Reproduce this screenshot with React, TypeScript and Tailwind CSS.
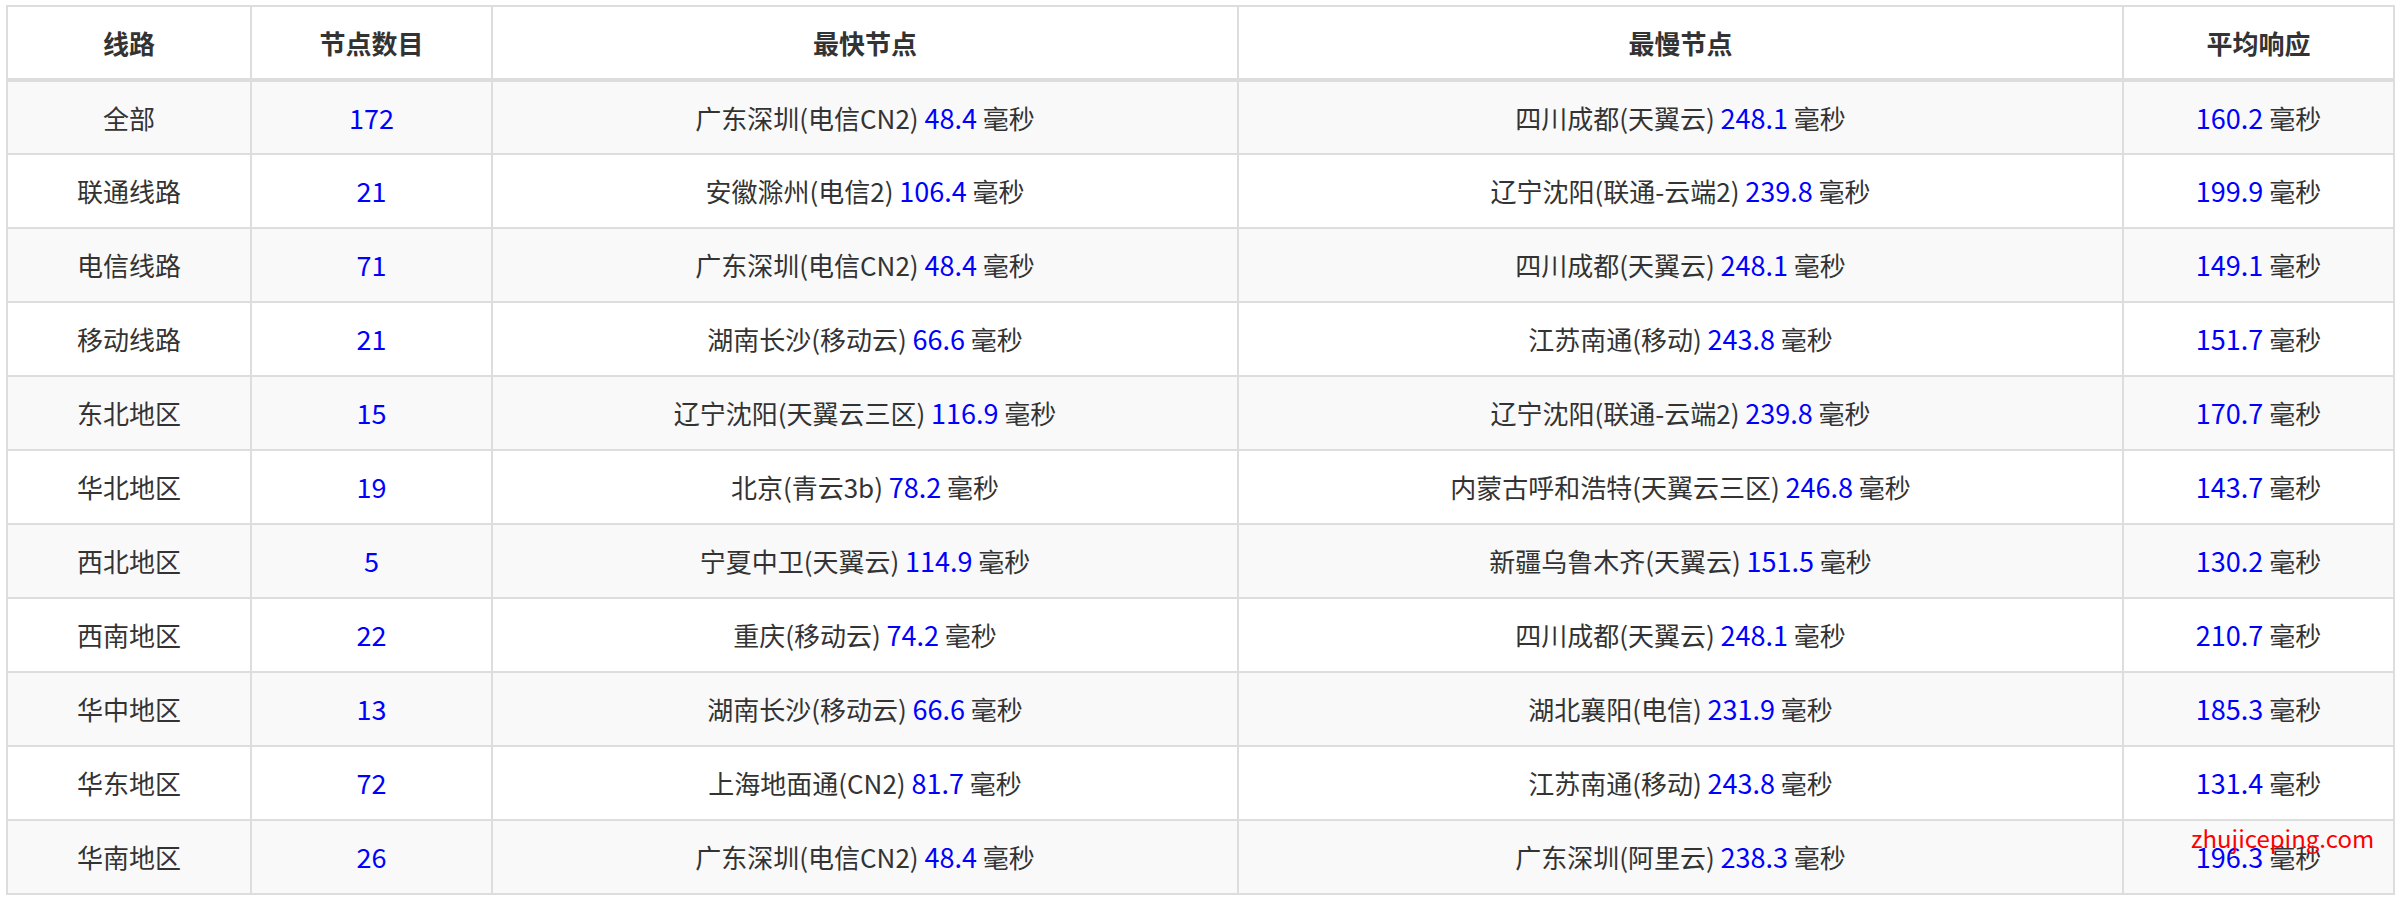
const rows: [string, string, string, string, string, string, string][] = [
  ['全部', '172', '广东深圳(电信CN2)', '48.4', '四川成都(天翼云)', '248.1', '160.2'],
  ['联通线路', '21', '安徽滁州(电信2)', '106.4', '辽宁沈阳(联通-云端2)', '239.8', '199.9'],
  ['电信线路', '71', '广东深圳(电信CN2)', '48.4', '四川成都(天翼云)', '248.1', '149.1'],
  ['移动线路', '21', '湖南长沙(移动云)', '66.6', '江苏南通(移动)', '243.8', '151.7'],
  ['东北地区', '15', '辽宁沈阳(天翼云三区)', '116.9', '辽宁沈阳(联通-云端2)', '239.8', '170.7'],
  ['华北地区', '19', '北京(青云3b)', '78.2', '内蒙古呼和浩特(天翼云三区)', '246.8', '143.7'],
  ['西北地区', '5', '宁夏中卫(天翼云)', '114.9', '新疆乌鲁木齐(天翼云)', '151.5', '130.2'],
  ['西南地区', '22', '重庆(移动云)', '74.2', '四川成都(天翼云)', '248.1', '210.7'],
  ['华中地区', '13', '湖南长沙(移动云)', '66.6', '湖北襄阳(电信)', '231.9', '185.3'],
  ['华东地区', '72', '上海地面通(CN2)', '81.7', '江苏南通(移动)', '243.8', '131.4'],
  ['华南地区', '26', '广东深圳(电信CN2)', '48.4', '广东深圳(阿里云)', '238.3', '196.3'],
];

function Ms({ v }: { v: string }) {
  return (
    <>
      <span className="text-[#0000ff] text-[27px]">{v}</span> 毫秒
    </>
  );
}

export default function App() {
  const cell = 'border-2 border-[#dddddd] text-center align-middle';
  return (
    <div
      className="w-[2406px] h-[902px] bg-white pl-[6px] pt-[5px] relative"
      style={{ fontFamily: '"Noto Sans CJK SC", "Noto Sans", sans-serif' }}
    >
      <table className="border-collapse w-[2389px] text-[26px] leading-[1.3] text-[#333333]">
        <thead>
          <tr className="h-[74px]">
            <th className={`${cell} border-b-4 w-[244px] font-bold`}>线路</th>
            <th className={`${cell} border-b-4 w-[241px] font-bold`}>节点数目</th>
            <th className={`${cell} border-b-4 w-[746px] font-bold`}>最快节点</th>
            <th className={`${cell} border-b-4 w-[885px] font-bold`}>最慢节点</th>
            <th className={`${cell} border-b-4 font-bold`}>平均响应</th>
          </tr>
        </thead>
        <tbody>
          {rows.map((r, i) => (
            <tr key={i} className={`h-[74px] ${i % 2 === 0 ? 'bg-[#f9f9f9]' : 'bg-white'}`}>
              <td className={cell}>{r[0]}</td>
              <td className={`${cell} text-[#0000ff] text-[27px]`}>{r[1]}</td>
              <td className={cell}>
                {r[2]} <Ms v={r[3]} />
              </td>
              <td className={cell}>
                {r[4]} <Ms v={r[5]} />
              </td>
              <td className={cell}>
                <Ms v={r[6]} />
              </td>
            </tr>
          ))}
        </tbody>
      </table>
      <div className="absolute left-[2191px] top-[826px] text-[#ff0000] text-[24px] leading-none">
        zhujiceping.com
      </div>
    </div>
  );
}
